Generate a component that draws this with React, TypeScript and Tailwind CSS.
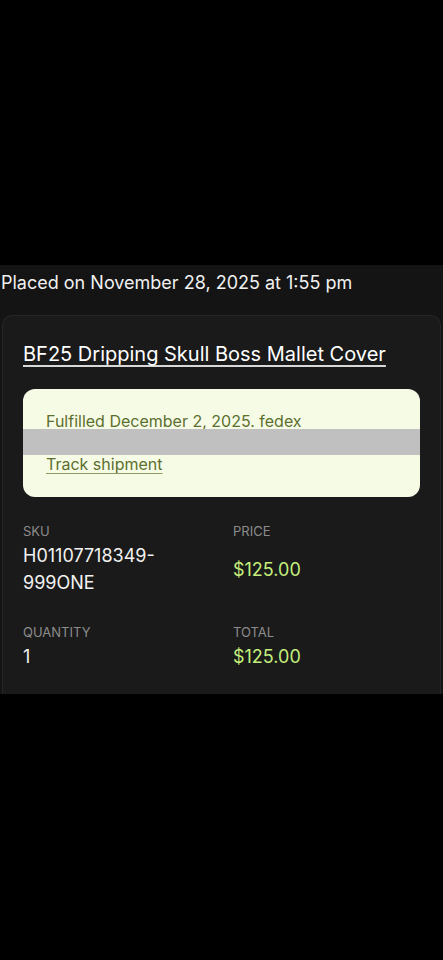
import React from 'react';

const font = { fontFamily: 'Inter, "Noto Sans", sans-serif' };

function Field({ label, children, green }: { label: string; children: React.ReactNode; green?: boolean }) {
  return (
    <div className="flex flex-col">
      <div className="text-[13px] leading-[20px] text-[#8c8c8c] uppercase">{label}</div>
      <div
        className={
          'flex-1 flex items-center text-[18px] leading-[27px] mt-[1px] ' +
          (green ? 'text-[#c4ee7c]' : 'text-[#f2f2f2]')
        }
      >
        {children}
      </div>
    </div>
  );
}

export default function App() {
  return (
    <div className="w-[443px] h-[960px] bg-black flex flex-col" style={font}>
      {/* Top blank */}
      <div className="h-[265px] shrink-0" />

      {/* Order section */}
      <div className="bg-[#141414] pt-[6px]">
        <p className="text-[18px] leading-[24px] text-[#f0f0f0] pl-[1px]">
          Placed on November 28, 2025 at 1:55 pm
        </p>

        <div className="mt-[20px] mx-[2px] bg-[#1a1a1a] border border-b-0 border-[#262626] rounded-t-[10px] px-[20px] pt-[24px] pb-[24px]">
          <a className="text-[20px] leading-[28px] text-white underline underline-offset-[4px] decoration-[1.5px] decoration-[#d8d8d8]">
            BF25 Dripping Skull Boss Mallet Cover
          </a>

          {/* Fulfillment box */}
          <div className="relative mt-[21px] bg-[#f6fbe6] rounded-[12px] px-[23px] pt-[20px] pb-[21px] text-[#5c6f2e]">
            <p className="text-[16px] leading-[24px]">Fulfilled December 2, 2025. fedex</p>
            <div className="h-[19px]" />
            <a className="text-[16px] leading-[24px] underline underline-offset-[3px] decoration-[#8a9a62]">
              Track shipment
            </a>
            {/* redacted tracking number */}
            <div className="absolute left-0 right-0 top-[40px] h-[26px] bg-[#c0c0c0]" />
          </div>

          {/* Details grid */}
          <div className="mt-[24px] grid grid-cols-[210px_1fr] gap-y-[26px]">
            <Field label="SKU">
              <span>
                H01107718349-
                <br />
                999ONE
              </span>
            </Field>
            <Field label="Price" green>
              $125.00
            </Field>
            <Field label="Quantity">1</Field>
            <Field label="Total" green>
              $125.00
            </Field>
          </div>
        </div>
      </div>

      <div className="flex-1 bg-black" />
    </div>
  );
}
